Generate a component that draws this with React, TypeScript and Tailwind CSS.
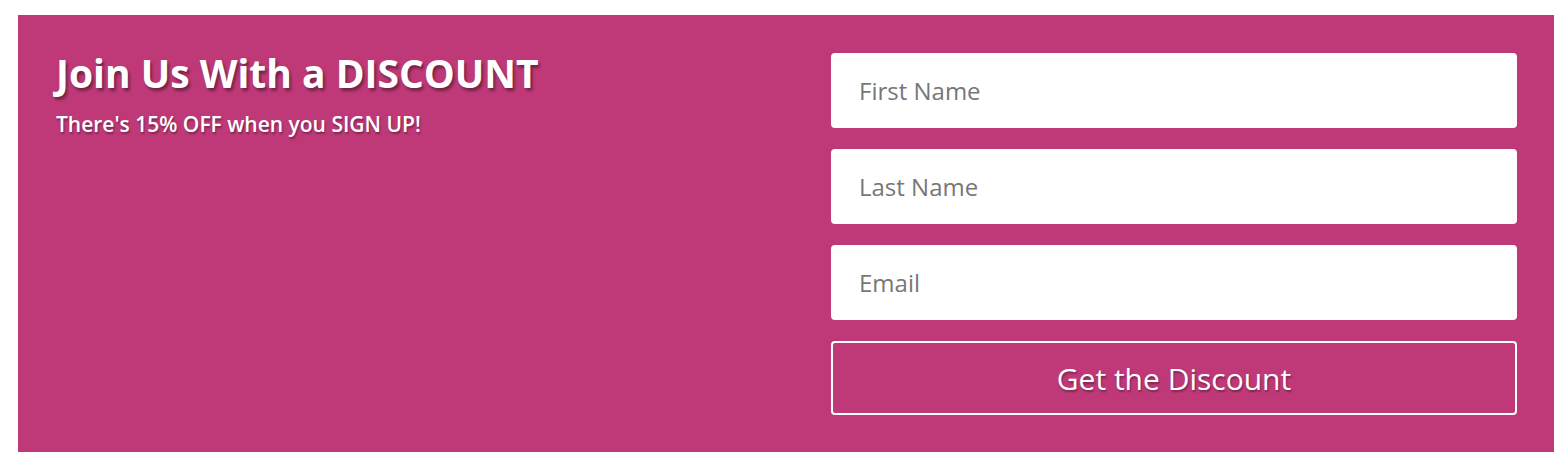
export default function App() {
  const font = { fontFamily: '"Open Sans", "Noto Sans", sans-serif' };
  const inputCls =
    "h-[75px] w-full rounded-[4px] bg-white px-[28px] text-[24px] text-[#777777] outline-none placeholder:text-[#777777]";
  return (
    <div className="bg-white pt-[15px] pb-[15px] pl-[18px] pr-[9px]" style={font}>
      <div className="flex justify-between bg-[#bf3978] pt-[38px] pb-[37px] pl-[38px] pr-[37px]">
        <div className="flex flex-col">
          <h1 className="text-[39px] font-bold leading-[40px] text-white [text-shadow:2px_3px_3px_rgba(0,0,0,0.4)]">
            Join Us With a DISCOUNT
          </h1>
          <p className="mt-[18px] text-[21px] font-semibold leading-[26px] text-white [text-shadow:1px_2px_2px_rgba(0,0,0,0.35)]">
            There's 15% OFF when you SIGN UP!
          </p>
        </div>
        <form className="flex w-[686px] flex-col gap-[21px]" onSubmit={(e) => e.preventDefault()}>
          <input className={inputCls} placeholder="First Name" style={font} />
          <input className={inputCls} placeholder="Last Name" style={font} />
          <input className={inputCls} placeholder="Email" style={font} />
          <button
            type="submit"
            className="h-[74px] w-full rounded-[4px] border-2 border-white bg-transparent text-[30px] text-white [text-shadow:1px_2px_2px_rgba(0,0,0,0.35)]"
            style={font}
          >
            Get the Discount
          </button>
        </form>
      </div>
    </div>
  );
}
